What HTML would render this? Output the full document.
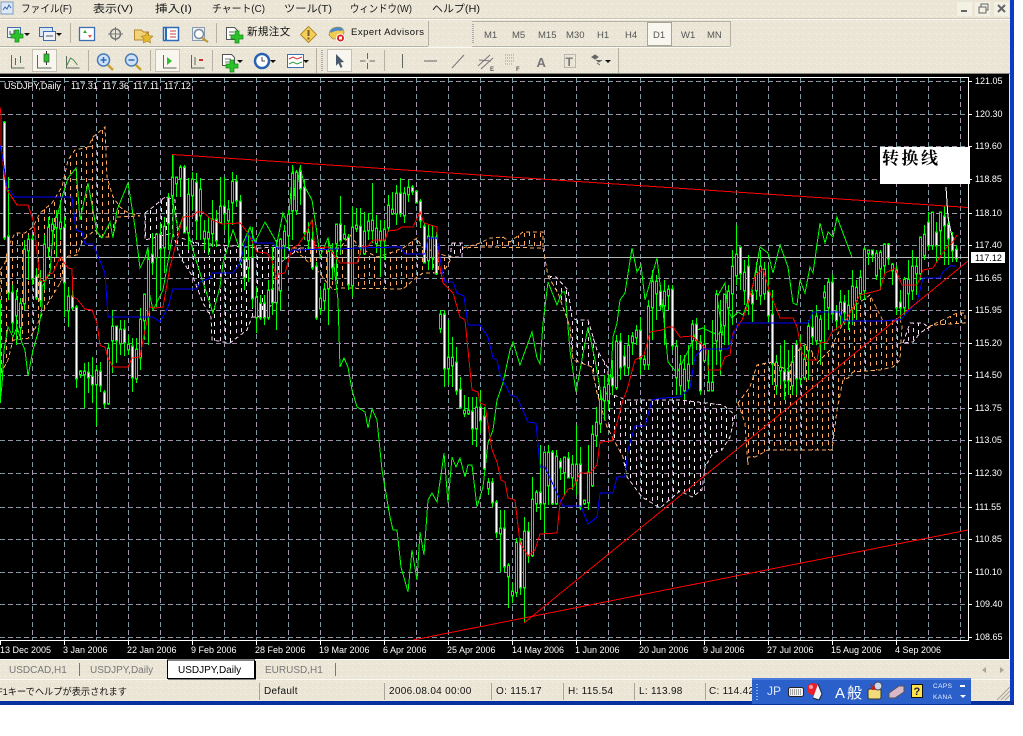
<!DOCTYPE html>
<html><head><meta charset="utf-8"><title>USDJPY,Daily</title>
<style>
html,body{margin:0;padding:0;background:#fff;width:1023px;height:736px;overflow:hidden}
svg{display:block}
text{font-family:"Liberation Sans","Noto Sans CJK JP",sans-serif}
.m{font-size:10.5px;fill:#1a1a1a}
.tf{font-size:9.5px;fill:#555}
.ax{font-size:9px;fill:#fff}
.st{font-size:10px;fill:#111;letter-spacing:.3px}
</style></head><body>
<svg width="1023" height="736" viewBox="0 0 1023 736" xmlns="http://www.w3.org/2000/svg">
<defs>
<pattern id="nz" width="6" height="6" patternUnits="userSpaceOnUse"><rect width="6" height="6" fill="#ebe6d6"/><path d="M0 0h1v1H0zM3 2h1v1H3zM5 4h1v1H5zM2 5h1v1H2z" fill="#f2dcd8"/><path d="M2 0h1v1H2zM5 1h1v1H5zM1 3h1v1H1zM4 5h1v1H4z" fill="#dfe8cf"/><path d="M4 3h1v1H4zM0 4h1v1H0z" fill="#f6f3e8"/></pattern>
<pattern id="po" width="16" height="8" patternUnits="userSpaceOnUse"><path d="M1.5 0v4M6.5 2v4M12.5 1v4" stroke="#ffa95c" stroke-width="1"/></pattern>
<pattern id="pw" width="16" height="8" patternUnits="userSpaceOnUse"><path d="M1.5 0v4M12.5 1v4" stroke="#f5d2f0" stroke-width="1"/><path d="M6.5 2v4" stroke="#fff" stroke-width="1"/></pattern>
<path id="pl" d="M-2-6h4v4h4v4h-4v4h-4v-4h-4v-4h4z" fill="#2cc22c" stroke="#118a11" stroke-width=".7"/>
<path id="dd" d="M-3 0h6l-3 3z" fill="#111"/>
<path id="gh" d="M0 81.5H968M0 114.5H968M0 146.5H968M0 179.5H968M0 213.5H968M0 245.5H968M0 278.5H968M0 310.5H968M0 343.5H968M0 375.5H968M0 408.5H968M0 440.5H968M0 473.5H968M0 507.5H968M0 539.5H968M0 572.5H968M0 604.5H968M0 637.5H968"/>
<path id="gv" d="M32.5 78V640M64.5 78V640M96.5 78V640M128.5 78V640M160.5 78V640M192.5 78V640M224.5 78V640M256.5 78V640M288.5 78V640M320.5 78V640M352.5 78V640M384.5 78V640M416.5 78V640M448.5 78V640M480.5 78V640M512.5 78V640M544.5 78V640M576.5 78V640M608.5 78V640M640.5 78V640M672.5 78V640M704.5 78V640M736.5 78V640M768.5 78V640M800.5 78V640M832.5 78V640M864.5 78V640M896.5 78V640M928.5 78V640M960.5 78V640"/>
<path id="bd" d="M4 123V237M8 237V292M12 293V322M16 300V315M20 304V327M24 250V303M28 240V250M32 240V278M36 277V297M40 282V300M44 245V280M48 228V247M52 225V230M56 218V227M60 223V228M64 228V282M68 297V310M72 297V307M76 308V378M80 372V374M84 372V374M88 373V377M92 377V384M96 371V384M100 372V385M104 393V403M108 349V403M112 327V340M116 327V340M120 330V343M124 330V342M128 345V349M132 347V377M136 350V378M140 320V357M144 295V320M148 260V316M152 255V262M156 235V257M160 235V248M164 227V247M168 198V223M172 178V195M176 178V183M180 168V178M184 168V232M188 195V232M192 180V195M196 183V220M200 190V215M204 232V238M208 233V238M212 220V233M216 220V240M220 207V222M224 207V213M228 210V220M232 182V202M236 182V200M240 202V260M244 260V277M248 260V267M252 258V298M256 298V317M260 304V317M264 304V317M268 291V317M272 290V302M276 247V302M280 240V290M284 232V245M288 215V235M292 174V210M296 173V210M300 172V188M304 188V232M308 233V240M312 240V267M316 267V317M320 299V308M324 290V300M328 252V288M332 253V267M336 225V243M340 225V240M344 235V238M348 238V284M352 228V285M356 226V228M360 227V247M364 232V253M368 222V230M372 221V230M376 229V243M380 232V240M384 230V240M388 206V227M392 210V213M396 194V213M400 194V213M404 194V215M408 188V194M412 188V191M416 192V202M420 202V220M424 227V262M428 237V260M432 238V257M436 238V273M440 315V328M444 315V368M448 358V368M452 358V365M456 363V390M460 390V407M464 411V413M468 411V413M472 412V428M476 408V428M480 408V420M484 417V468M488 483V488M492 483V502M496 503V532M500 529V533M504 529V566M508 566V576M512 592V595M516 543V592M520 543V587M524 532V587M528 532V555M532 500V555M536 493V503M540 493V503M544 453V503M548 453V485M552 453V503M556 457V503M560 462V467M564 458V472M568 459V477M572 465V477M576 465V480M580 465V507M584 501V503M588 473V502M592 435V485M596 423V435M600 400V423M604 388V400M608 385V400M612 378V385M616 342V387M620 342V367M624 357V365M628 346V367M632 337V342M636 331V337M640 331V358M644 360V364M648 307V364M652 282V307M656 282V293M660 292V305M664 292V305M668 290V295M672 290V345M676 347V377M680 365V385M684 370V390M688 365V380M692 325V340M696 325V340M700 343V390M704 345V360M708 383V390M712 383V390M716 295V340M720 333V350M724 295V325M728 292V307M732 267V293M736 255V275M740 248V273M744 273V290M748 267V300M752 295V303M756 273V290M760 267V295M764 270V293M768 292V315M772 315V363M776 363V385M780 368V370M784 372V380M788 372V380M792 363V385M796 345V378M800 350V378M804 360V377M808 327V350M812 328V336M816 317V340M820 320V340M824 293V297M828 283V307M832 283V313M836 312V320M840 303V315M844 303V312M848 306V320M852 287V307M856 288V300M860 278V293M864 250V290M868 251V253M872 251V254M876 254V275M880 253V268M884 245V265M888 245V258M892 265V270M896 270V307M900 303V307M904 280V307M908 280V293M912 267V290M916 267V273M920 238V273M924 235V255M928 223V245M932 213V245M936 233V245M940 213V230M944 217V225M948 225V238M952 238V250M956 250V258"/>
</defs>

<!-- window base -->
<rect x="0" y="0" width="1010" height="702" fill="url(#nz)" shape-rendering="crispEdges"/>
<rect x="1010" y="0" width="4" height="702" fill="#0b3cc4"/>
<rect x="0" y="701" width="1014" height="4" fill="#08309f"/>

<!-- menu bar -->
<rect x="0" y="18" width="1010" height="1" fill="#c9c6b8"/><rect x="0" y="19" width="1010" height="1" fill="#fbfaf2"/>
<rect x="1" y="2" width="12" height="12" fill="#dfe9f5" stroke="#7d9cc4"/><path d="M3 10l2-3 2 2 2-4 2 3" fill="none" stroke="#3568b0"/>
<text class="m" x="21" y="12" textLength="51" lengthAdjust="spacingAndGlyphs">ファイル(F)</text>
<text class="m" x="93" y="12" textLength="40" lengthAdjust="spacingAndGlyphs">表示(V)</text>
<text class="m" x="155" y="12" textLength="37" lengthAdjust="spacingAndGlyphs">挿入(I)</text>
<text class="m" x="212" y="12" textLength="53" lengthAdjust="spacingAndGlyphs">チャート(C)</text>
<text class="m" x="284" y="12" textLength="48" lengthAdjust="spacingAndGlyphs">ツール(T)</text>
<text class="m" x="350" y="12" textLength="62" lengthAdjust="spacingAndGlyphs">ウィンドウ(W)</text>
<text class="m" x="432" y="12" textLength="48" lengthAdjust="spacingAndGlyphs">ヘルプ(H)</text>
<rect x="957" y="2" width="15" height="14" fill="#f3f0e4"/><rect x="975" y="2" width="15" height="14" fill="#f3f0e4"/><rect x="994" y="2" width="15" height="14" fill="#f3f0e4"/>
<rect x="961" y="10" width="6" height="2" fill="#666"/>
<path d="M979 7h7v6h-7zM981 7V4h7v6h-2" fill="none" stroke="#666"/>
<path d="M998 5l7 7M1005 5l-7 7" stroke="#666" stroke-width="2"/>

<!-- toolbar 1 -->
<path d="M428.500 21V46M0 46.500H428M472 46.500H730M730.500 21V46M472 21.500H730" stroke="#b5b2a4" fill="none"/>
<path d="M0 47.500H730" stroke="#fbfaf2"/>
<rect x="7.500" y="27.500" width="13" height="10" fill="#eef3fa" stroke="#3d6fb0"/><path d="M10 31v4M14 30v5" stroke="#555"/><use href="#pl" x="17" y="36"/><use href="#dd" x="27" y="33"/>
<rect x="39.500" y="27.500" width="13" height="9" fill="#dbe7f5" stroke="#3d6fb0"/><rect x="43.500" y="31.500" width="12" height="9" fill="#eef3fa" stroke="#3d6fb0"/><path d="M46 36h7" stroke="#555"/><use href="#dd" x="59" y="33"/>
<path d="M70.500 23V43" stroke="#b5b2a4"/>
<rect x="79.500" y="27.500" width="15" height="13" fill="#fff" stroke="#3d6fb0" stroke-width="1.300"/><path d="M83 33l2-3 2 3z" fill="#2aaa2a"/><path d="M88 35l2 3 2-3z" fill="#e05a30"/>
<circle cx="115.500" cy="34" r="5" fill="none" stroke="#777" stroke-width="1.500"/><path d="M115.500 27v14M108 34h15" stroke="#777"/>
<path d="M134.500 30h7l2 2h5v8h-14z" fill="#f2d27a" stroke="#b48a30"/><path d="M147 32l1.800 3.600 4 .6-2.900 2.800.7 4-3.600-1.900-3.600 1.900.7-4-2.900-2.800 4-.6z" fill="#e8b830" stroke="#a07a20" stroke-width=".6"/>
<rect x="163.500" y="27.500" width="15" height="13" fill="#fff" stroke="#2f6ab8" stroke-width="1.500"/><path d="M166 28v12" stroke="#2f6ab8" stroke-width="2"/><path d="M170 31h6M170 34h6M170 37h6" stroke="#c04040"/>
<rect x="192.500" y="27.500" width="12" height="13" fill="#e8eef5" stroke="#8a9ab0"/><circle cx="199" cy="34" r="4.500" fill="#fff" stroke="#7a8a9a" stroke-width="1.500"/><path d="M202 38l6 4" stroke="#c09830" stroke-width="2"/>
<path d="M216.500 23V43" stroke="#b5b2a4"/>
<path d="M226.500 27.500h8l3 3v9h-11z" fill="#fff" stroke="#555"/><path d="M229 32h5M229 35h5" stroke="#666"/><use href="#pl" x="237" y="37"/>
<text x="247" y="35" font-size="10.500" fill="#111" letter-spacing=".4">新規注文</text>
<path d="M308.500 26.500l8 8-8 8-8-8z" fill="#f6cf5a" stroke="#b08a30"/><path d="M308.500 30v6" stroke="#7a5a20" stroke-width="2"/><rect x="307.500" y="37.500" width="2" height="2" fill="#7a5a20"/>
<path d="M329 35c0-6 5-8 9-8s6 2 6 6l-3 6h-8z" fill="#f2cc50" stroke="#9a7a30" stroke-width=".6"/><path d="M330 31c3-4 10-5 13-2l-1 2c-4-1-8 0-11 2z" fill="#4f8ac8"/><circle cx="340.500" cy="38" r="4" fill="#d92020" stroke="#fff"/><rect x="339" y="36.500" width="3" height="3" fill="#fff"/>
<text x="351" y="35" font-size="9.500" fill="#111" letter-spacing=".5">Expert Advisors</text>

<!-- timeframes -->
<path d="M473 24v19" stroke="#aaa" stroke-width="2" stroke-dasharray="1 1"/>
<rect x="647.500" y="22.500" width="24" height="23" fill="#f8f6ee" stroke="#a8a598"/>
<text class="tf" x="484" y="38">M1</text><text class="tf" x="512" y="38">M5</text><text class="tf" x="538" y="38">M15</text><text class="tf" x="566" y="38">M30</text><text class="tf" x="597" y="38">H1</text><text class="tf" x="625" y="38">H4</text><text class="tf" x="653" y="38">D1</text><text class="tf" x="681" y="38">W1</text><text class="tf" x="707" y="38">MN</text>

<!-- toolbar 2 -->
<path d="M618.500 48V73" stroke="#b5b2a4"/>
<g fill="none" stroke="#5b6b5b">
<path d="M11.500 55v13h13M15.500 58v7M20.500 56v7"/>
<path d="M66.500 56v12h13"/>
<path d="M66.500 66l4-8 3 2 4 5" stroke="#4a8a4a"/>
<path d="M191.500 55v13h13"/>
<path d="M88.500 50V71M150.500 50V71M212.500 50V71M384.500 50V71" stroke="#b5b2a4"/>
<path d="M316.500 48V73" stroke="#b5b2a4"/>
</g>
<rect x="32.500" y="49.500" width="24" height="22" fill="#f8f6ee" stroke="#c5c2b4"/>
<path d="M37.500 55v13h14" fill="none" stroke="#5b6b5b"/><path d="M46.500 51v14" stroke="#333"/><rect x="44" y="54" width="5" height="8" fill="#2cc22c" stroke="#333" stroke-width=".6"/>
<circle cx="103.500" cy="60" r="6" fill="#cfe2f7" stroke="#4a7ab8" stroke-width="1.500"/><path d="M100.500 60h6M103.500 57v6" stroke="#2a6ab8" stroke-width="1.500"/><path d="M108 65l5 5" stroke="#c8a030" stroke-width="2.500"/>
<circle cx="131.500" cy="60" r="6" fill="#cfe2f7" stroke="#4a7ab8" stroke-width="1.500"/><path d="M128.500 60h6" stroke="#2a6ab8" stroke-width="1.500"/><path d="M136 65l5 5" stroke="#c8a030" stroke-width="2.500"/>
<rect x="155.500" y="49.500" width="24" height="22" fill="#f8f6ee" stroke="#c5c2b4"/><path d="M163.500 55v13h13" fill="none" stroke="#5b6b5b"/><path d="M167 57l5 4-5 4z" fill="#2cc22c"/>
<path d="M195 57v8" fill="none" stroke="#5b6b5b"/><path d="M199 60h4" stroke="#d03030" stroke-width="2"/>
<path d="M222.500 54.500h9l3 3v8h-12z" fill="#fff" stroke="#555"/><path d="M225 59h6M225 62h6" stroke="#777"/><use href="#pl" x="232" y="66"/><use href="#dd" x="240" y="60"/>
<circle cx="262" cy="61" r="7" fill="#fff" stroke="#2a62b0" stroke-width="2.500"/><path d="M262 57v4h3" fill="none" stroke="#444"/><use href="#dd" x="273" y="60"/>
<rect x="287.500" y="54.500" width="16" height="13" fill="#fff" stroke="#3d6fb0"/><path d="M289 59l4-2 4 2 5-2" fill="none" stroke="#d03030"/><path d="M289 64l4-2 4 2 5-2" fill="none" stroke="#3a9a3a"/><use href="#dd" x="306" y="60"/>
<path d="M322 50v21" stroke="#aaa" stroke-width="2" stroke-dasharray="1 1"/>
<rect x="327.500" y="49.500" width="24" height="22" fill="#f8f6ee" stroke="#c5c2b4"/>
<path d="M336 54l8 8-3.500 .5 2 4.500-2 .8-2-4.500-2.500 2.500z" fill="#4a5a6a"/>
<path d="M367.500 53v6M367.500 63v6M360 61h5.500M369.500 61h5.500" stroke="#666"/>
<path d="M402.500 54v14" stroke="#666"/>
<path d="M424 61h13" stroke="#666"/>
<path d="M452 68l12-13" stroke="#777"/>
<path d="M478 66l12-11M481 69l12-11M479 60l12 1" stroke="#777" fill="none"/>
<text x="490" y="71" font-size="6" font-weight="bold" fill="#555">E</text>
<path d="M505 55h10M505 58h10M505 61h10M505 64h8" stroke="#999" stroke-dasharray="1 1"/>
<text x="516" y="71" font-size="6" font-weight="bold" fill="#555">F</text>
<text x="536.500" y="67" font-size="13" font-weight="bold" fill="#777">A</text>
<rect x="564.500" y="54.500" width="11" height="13" fill="none" stroke="#888" stroke-dasharray="1 1"/>
<text x="565.500" y="66" font-size="12" font-weight="bold" fill="#777">T</text>
<path d="M592 57l3-2 3 2-3 2zM596 60l3 2 3-2M600 65l-3-2" fill="#666" stroke="#666"/><use href="#dd" x="608" y="60"/>

<!-- chart -->
<rect x="0" y="73" width="1010" height="1" fill="#8a887c"/>
<rect x="0" y="74" width="1009" height="585" fill="#000"/>
<rect x="0" y="659" width="1010" height="1" fill="#fff"/>

<g stroke-width="1" fill="none" shape-rendering="crispEdges">
<g stroke="#7b9ba0" stroke-dasharray="5 11"><use href="#gh"/><use href="#gv"/></g>
<g stroke="#a594b0" stroke-dasharray="5 11" stroke-dashoffset="8"><use href="#gh"/><use href="#gv"/></g>
</g>

<!-- clouds -->
<g stroke-dasharray="4 3" stroke-width="1" shape-rendering="crispEdges">
<polygon fill="url(#po)" stroke="#ffa95c" points="0,270 5,263 8,247 15,233 25,233 33,227 40,213 52,203 62,187 68,160 75,150 88,147 93,137 105,127 107,177 113,197 120,207 127,212 140,216 117,217 113,237 100,237 95,230 83,240 77,255 63,257 62,280 50,300 45,308 38,323 30,338 13,340 8,360 0,375"/>
<polygon fill="url(#pw)" stroke="#f5d2f0" points="145,213 153,207 165,197 175,200 178,237 197,243 220,245 260,248 280,247 300,248 280,263 277,300 258,317 252,317 247,330 230,343 212,340 211,317 203,303 193,277 180,257 173,233 145,240"/>
<polygon fill="url(#po)" stroke="#ffa95c" points="293,248 340,248 350,235 360,248 377,257 390,253 403,248 417,238 422,247 443,255 452,257 443,273 423,273 417,277 403,289 340,288 333,290 317,270"/>
<polygon fill="url(#pw)" stroke="#f5d2f0" points="452,243 463,243 462,257 450,257"/>
<polygon fill="url(#po)" stroke="#ffa95c" points="463,248 480,243 490,238 503,237 510,242 523,232 543,232 543,248 483,247"/>
<polygon fill="url(#pw)" stroke="#f5d2f0" points="548,276 556,277 568,290 572,318 577,320 588,320 597,350 608,368 608,393 627,400 680,400 723,405 735,415 730,437 722,450 713,453 705,467 702,490 692,497 680,491 660,508 642,497 627,477 623,457 607,427 597,393 592,367 573,360 570,327 558,293"/>
<polyline fill="none" stroke="#ffa95c" points="543,248 548,276 558,293 570,327 573,360 592,367 597,393 607,427 623,457"/>
<polygon fill="url(#po)" stroke="#ffa95c" points="738,403 745,423 748,465 748,457 755,457 768,450 832,450 837,410 843,380 848,378 853,372 880,370 893,367 900,360 902,325 900,320 883,321 870,295 853,307 843,323 830,350 817,363 808,343 800,348 787,370 772,362 757,365 750,387"/>
<polygon fill="url(#pw)" stroke="#f5d2f0" points="903,343 910,323 923,323 928,327 933,325 920,333 913,342"/>
<polygon fill="url(#po)" stroke="#ffa95c" points="928,327 938,322 947,318 957,313 965,313 965,323 933,325"/>
</g>

<!-- price line -->
<path d="M0 257.500H968" stroke="#b8b8b8" stroke-width="1" shape-rendering="crispEdges"/>

<!-- chikou -->
<polyline fill="none" stroke="#00ff00" stroke-width="1" shape-rendering="crispEdges" points="0,403 2,385 4,350 8,327 13,337 17,327 22,343 25,350 28,376 33,350 38,333 42,307 42,287 50,273 53,233 58,213 62,197 68,178 76,168 80,220 88,183 97,232 102,238 110,222 113,238 117,210 128,183 135,227 140,268 145,258 148,247 148,287 153,310 163,290 173,233 173,155 172,197 178,230 183,217 200,273 213,313 220,287 223,263 233,230 240,250 250,227 255,242 265,222 277,243 283,213 288,225 293,167 295,200 300,167 305,187 312,200 317,233 320,257 328,238 333,257 338,300 340,367 344,358 348,367 352,390 357,407 365,412 368,428 372,409 377,420 382,470 390,517 393,530 397,530 401,567 408,592 412,550 417,580 420,532 424,555 428,500 432,493 437,502 442,468 444,453 448,503 452,457 456,467 460,458 465,477 468,465 472,465 477,507 483,487 488,443 493,430 497,400 503,383 510,350 513,342 520,365 532,332 537,358 540,364 543,323 548,282 557,305 562,292 565,292 570,350 576,392 588,327 595,360 602,400 607,393 611,373 613,337 617,323 620,300 625,293 632,248 637,272 641,265 645,300 657,258 663,310 668,362 677,373 685,357 690,347 697,330 703,328 713,333 723,335 717,297 725,283 728,310 732,318 738,312 743,315 752,290 760,247 768,253 773,273 780,245 788,267 793,303 797,305 800,280 805,293 810,267 813,273 820,223 825,243 828,232 833,237 837,217 843,233 852,257"/>

<!-- candles -->
<g transform="translate(.5 0)" shape-rendering="crispEdges" fill="none">
<path stroke="#00ff00" stroke-width="1" d="M0 300V403M4 121V240M8 177V300M12 285V333M16 290V345M20 298V340M24 240V310M28 235V280M32 235V285M36 268V300M40 270V307M44 235V290M48 217V257M52 218V245M56 210V257M60 200V240M64 217V317M68 287V327M72 287V310M76 305V388M80 370V378M84 363V408M88 362V393M92 357V403M96 365V426M100 362V392M104 390V408M108 343V405M112 310V373M116 327V363M120 320V355M124 320V356M128 335V355M132 338V392M136 338V383M140 308V370M144 295V340M148 250V345M152 233V275M156 235V307M160 223V290M164 217V273M168 193V250M172 155V205M176 177V197M180 165V197M184 165V233M188 178V250M192 172V210M196 173V240M200 178V240M204 220V250M208 217V255M212 200V247M216 210V247M220 177V223M224 177V230M228 200V247M232 172V225M236 175V207M240 195V265M244 245V290M248 230V282M252 227V308M256 287V333M260 295V320M264 295V325M268 280V320M272 247V315M276 240V330M280 238V310M284 225V260M288 210V250M292 165V240M296 170V215M300 165V205M304 180V240M308 222V250M312 220V270M316 262V320M320 290V315M324 283V310M328 240V325M332 243V280M336 225V280M340 196V255M344 225V240M348 234V290M352 207V297M356 208V232M360 208V255M364 212V255M368 213V240M372 183V243M376 215V253M380 220V277M384 220V260M388 195V232M392 192V215M396 185V225M400 178V217M404 187V223M408 180V202M412 185V195M416 192V203M420 199V228M424 223V263M428 225V270M432 225V270M436 232V275M440 310V333M444 310V387M448 320V385M452 337V387M456 347V395M460 377V408M464 395V417M468 397V415M472 397V445M476 397V447M480 390V433M484 407V470M488 478V495M492 478V507M496 500V538M500 510V572M504 510V572M508 563V608M512 583V603M516 538V597M520 538V595M524 517V623M528 522V563M532 477V557M536 490V512M540 445V520M544 453V533M548 445V505M552 450V505M556 450V505M560 458V480M564 457V495M568 452V478M572 455V490M576 425V495M580 447V510M584 500V505M588 445V510M592 425V487M596 407V447M600 390V433M604 375V420M608 375V410M612 360V395M616 335V390M620 333V380M624 345V375M628 335V375M632 332V355M636 325V345M640 317V375M644 355V370M648 300V370M652 270V340M656 275V320M660 285V310M664 280V345M668 285V310M672 285V350M676 340V395M680 355V395M684 355V400M688 345V390M692 320V365M696 318V350M700 335V395M704 325V360M708 350V390M712 320V390M716 290V365M720 300V375M724 295V345M728 285V345M732 250V325M736 225V285M740 247V290M744 260V305M748 255V315M752 290V322M756 262V300M760 250V305M764 262V300M768 265V322M772 290V385M776 355V395M780 345V385M784 340V400M788 350V395M792 345V395M796 340V395M800 335V385M804 345V380M808 320V380M812 310V345M816 305V345M820 315V365M824 285V350M828 278V330M832 275V320M836 305V330M840 290V325M844 295V325M848 290V330M852 270V325M856 280V320M860 270V300M864 247V300M868 250V265M872 250V262M876 250V280M880 250V290M884 243V275M888 243V265M892 263V285M896 265V315M900 290V320M904 277V315M908 260V310M912 250V300M916 257V295M920 238V280M924 225V260M928 212V250M932 213V250M936 222V262M940 212V255M944 206V265M948 217V265M952 232V262M956 245V262"/>
<use href="#bd" stroke="#00ff00" stroke-width="3" stroke-linecap="square"/>
<use href="#bd" stroke="#000" stroke-width="1"/>
<path stroke="#fff" stroke-width="1" d="M4 123V237M8 237V292M12 293V322M32 240V278M36 277V297M40 282V300M64 228V282M72 297V307M76 308V378M88 373V377M92 377V384M100 372V385M104 393V403M116 327V340M124 330V342M132 347V377M152 255V262M160 235V248M168 198V223M184 168V232M196 183V220M216 220V240M224 207V213M236 182V200M240 202V260M244 260V277M252 258V298M260 304V317M264 304V317M272 290V302M300 172V188M304 188V232M312 240V267M316 267V317M332 253V267M340 225V240M348 238V284M360 227V247M400 194V213M412 188V191M416 192V202M420 202V220M424 227V262M436 238V273M444 315V368M456 363V390M460 390V407M472 412V428M480 408V420M484 417V468M492 483V502M496 503V532M504 529V566M520 543V587M528 532V555M540 493V503M552 453V503M560 462V467M568 459V477M580 465V507M612 378V385M620 342V367M624 357V365M640 331V358M660 292V305M672 290V345M696 325V340M700 343V390M740 248V273M748 267V300M752 295V303M768 292V315M772 315V363M784 372V380M788 372V380M796 345V378M812 328V336M832 283V313M836 312V320M844 303V312M872 251V254M888 245V258M896 270V307M900 303V307M928 223V245M936 233V245M944 217V225M948 225V238M952 238V250M956 250V258"/>
</g>

<!-- tenkan -->
<polyline fill="none" stroke="#ff0000" stroke-width="1" shape-rendering="crispEdges" points="0,107 1,115 1,145 4,173 7,190 17,205 28,205 33,220 35,233 40,280 45,282 48,274 53,273 60,257 68,268 72,269 73,297 77,299 85,309 92,310 97,323 100,345 101,346 105,347 108,358 113,367 128,367 132,358 140,357 143,340 150,307 155,308 163,307 170,267 177,240 183,217 193,216 197,212 203,212 212,220 222,224 240,223 248,233 257,252 267,253 272,260 277,280 278,274 285,273 292,248 298,245 305,235 312,220 315,248 328,247 340,263 346,263 357,263 362,247 368,246 373,240 385,240 388,231 397,230 402,227 413,227 420,212 424,223 437,227 438,257 443,283 453,293 460,317 465,320 472,390 478,392 480,403 485,405 492,450 497,462 501,480 505,482 508,498 515,500 520,543 528,556 535,550 540,534 557,533 560,503 568,489 573,488 580,473 590,473 597,465 600,442 612,441 617,423 623,400 627,390 635,360 644,355 650,332 662,330 668,327 673,327 680,337 692,336 700,343 707,350 708,370 720,370 725,357 730,355 733,333 742,320 747,308 755,276 763,269 770,293 780,318 793,318 797,327 802,353 808,360 817,360 820,343 827,342 832,332 845,322 860,295 880,290 885,273 895,268 902,285 917,285 923,270 933,268 938,260 947,247 952,243 957,235"/>
<!-- kijun -->
<polyline fill="none" stroke="#0000ff" stroke-width="1" shape-rendering="crispEdges" points="0,145 3,160 7,187 15,197 72,197 76,230 82,232 85,244 93,244 105,273 108,317 153,317 160,322 168,307 173,289 197,289 200,282 210,278 212,273 233,273 240,263 248,233 255,243 273,243 277,248 287,248 290,252 293,250 340,249 357,248 400,247 405,254 425,254 428,238 437,238 442,270 445,282 453,282 457,293 464,296 468,325 480,325 488,337 493,358 497,360 500,375 508,390 510,395 517,397 528,422 536,423 540,467 545,467 550,478 563,506 581,506 588,524 597,517 600,493 613,493 617,477 625,477 628,450 635,426 645,426 652,400 662,398 680,397 690,388 695,357 702,349 728,349 738,323 808,323 813,312 840,312 843,321 883,321 893,320 900,320 917,302 923,278 940,278 943,272 950,266 956,266"/>

<!-- trend lines -->
<g fill="none" stroke="#ff0000" stroke-width="1" shape-rendering="crispEdges">
<path d="M172 154.500L968 207.500"/>
<path d="M524 623L968 261"/>
<path d="M413 640L968 530"/>
</g>

<!-- annotation -->
<polyline fill="none" stroke="#fff" stroke-width="1" shape-rendering="crispEdges" points="946,187 948,217 951,232 953,240"/>

<!-- frame -->
<path d="M0 77.500H968.500V640.500H0" fill="none" stroke="#fff" shape-rendering="crispEdges"/>
<path d="M968 81.500h4M968 114.500h4M968 146.500h4M968 179.500h4M968 213.500h4M968 245.500h4M968 278.500h4M968 310.500h4M968 343.500h4M968 375.500h4M968 408.500h4M968 440.500h4M968 473.500h4M968 507.500h4M968 539.500h4M968 572.500h4M968 604.500h4M968 637.500h4M.5 640v5M64.500 640v5M128.500 640v5M192.500 640v5M256.500 640v5M320.500 640v5M384.500 640v5M448.500 640v5M512.500 640v5M576.500 640v5M640.500 640v5M704.500 640v5M768.500 640v5M832.500 640v5M896.500 640v5" stroke="#fff" shape-rendering="crispEdges"/>

<rect x="880" y="147" width="90" height="37" fill="#fff"/>
<text x="882" y="164" font-size="17" font-weight="bold" fill="#000" letter-spacing="2.500" style="font-family:'Liberation Serif','Noto Serif CJK SC',serif">转换线</text>

<!-- price axis -->
<g class="ax">
<text class="ax" x="975" y="84">121.05</text><text class="ax" x="975" y="117">120.30</text><text class="ax" x="975" y="149">119.60</text><text class="ax" x="975" y="182">118.85</text><text class="ax" x="975" y="216">118.10</text><text class="ax" x="975" y="248">117.40</text><text class="ax" x="975" y="281">116.65</text><text class="ax" x="975" y="313">115.95</text><text class="ax" x="975" y="346">115.20</text><text class="ax" x="975" y="378">114.50</text><text class="ax" x="975" y="411">113.75</text><text class="ax" x="975" y="443">113.05</text><text class="ax" x="975" y="476">112.30</text><text class="ax" x="975" y="510">111.55</text><text class="ax" x="975" y="542">110.85</text><text class="ax" x="975" y="575">110.10</text><text class="ax" x="975" y="607">109.40</text><text class="ax" x="975" y="640">108.65</text>
</g>
<rect x="971" y="252" width="34" height="11" fill="#fff"/>
<text x="975" y="261" font-size="9" fill="#000">117.12</text>

<!-- date axis -->
<text class="ax" x="0" y="653">13 Dec 2005</text><text class="ax" x="63" y="653">3 Jan 2006</text><text class="ax" x="127" y="653">22 Jan 2006</text><text class="ax" x="191" y="653">9 Feb 2006</text><text class="ax" x="255" y="653">28 Feb 2006</text><text class="ax" x="319" y="653">19 Mar 2006</text><text class="ax" x="383" y="653">6 Apr 2006</text><text class="ax" x="447" y="653">25 Apr 2006</text><text class="ax" x="512" y="653">14 May 2006</text><text class="ax" x="575" y="653">1 Jun 2006</text><text class="ax" x="639" y="653">20 Jun 2006</text><text class="ax" x="703" y="653">9 Jul 2006</text><text class="ax" x="767" y="653">27 Jul 2006</text><text class="ax" x="831" y="653">15 Aug 2006</text><text class="ax" x="895" y="653">4 Sep 2006</text>

<text class="ax" x="4" y="89">USDJPY,Daily</text><text class="ax" x="71" y="89">117.31</text><text class="ax" x="102" y="89">117.36</text><text class="ax" x="133" y="89">117.11</text><text class="ax" x="164" y="89">117.12</text>

<!-- tabs -->
<rect x="0" y="679" width="1010" height="1" fill="#fbfaf2"/>
<rect x="167.500" y="660" width="87" height="18.500" fill="#fff" stroke="#000"/>
<path d="M255.500 661V679H168" stroke="#000" fill="none"/>
<path d="M79.500 663V676M335.500 663V676" stroke="#777"/>
<text x="9" y="673" fill="#777" font-size="10">USDCAD,H1</text>
<text x="90" y="673" fill="#777" font-size="10">USDJPY,Daily</text>
<text x="178" y="673" fill="#000" font-size="10">USDJPY,Daily</text>
<text x="265" y="673" fill="#777" font-size="10">EURUSD,H1</text>
<path d="M986 667v6l-4-3zM1000 667v6l4-3z" fill="#a8a598"/>

<!-- status bar -->
<path d="M259.500 683v17M384.500 683v17M491.500 683v17M563.500 683v17M634.500 683v17M705.500 683v17" stroke="#a8a598"/>
<text x="-3" y="695" font-size="9.500" fill="#111" textLength="130" lengthAdjust="spacingAndGlyphs">F1キーでヘルプが表示されます</text>
<text class="st" x="264" y="694">Default</text>
<text class="st" x="389" y="694">2006.08.04 00:00</text>
<text class="st" x="496" y="694">O: 115.17</text>
<text class="st" x="568" y="694">H: 115.54</text>
<text class="st" x="639" y="694">L: 113.98</text>
<text class="st" x="709" y="694">C: 114.42</text>
<path d="M997 700l13-13M1001 700l9-9M1005 700l5-5" stroke="#a8a598" fill="none"/>

<!-- language bar -->
<rect x="752" y="678" width="219" height="26" fill="#2b5fc9"/>
<rect x="752" y="678" width="219" height="2" fill="#4a7ada"/>
<path d="M757 684v16" stroke="#8fb0ee" stroke-width="2" stroke-dasharray="1 2"/>
<text x="767" y="695" font-size="12" fill="#dce8ff">JP</text>
<rect x="788.500" y="687.500" width="15" height="9" rx="2" fill="#f4f4f4" stroke="#222"/><path d="M790 690h12M790 692h12M790 694h12" stroke="#555" stroke-dasharray="1 1"/>
<circle cx="813" cy="689" r="6" fill="#e8202a"/><path d="M818 684l4 10-3 6-6-2" fill="#f4f4f4" stroke="#223"/><circle cx="811" cy="687" r="2" fill="#ff9aa0"/>
<text x="835" y="698" font-size="15" fill="#fff">A</text>
<text x="847" y="698" font-size="15" fill="#fff">般</text>
<rect x="868" y="689" width="13" height="10" rx="2" fill="#f2dc7a" stroke="#333"/><circle cx="878" cy="686" r="4" fill="#cfd8e8" stroke="#445"/><path d="M871 684l2 6M874 686l1 4" stroke="#c02020" stroke-width="1.500"/>
<path d="M889 693l10-7h5v6l-9 6h-6z" fill="#d8b8c8" stroke="#555"/>
<rect x="911.500" y="684.500" width="11" height="13" fill="#ffe34a" stroke="#111"/><text x="913.500" y="695" font-size="11" font-weight="bold" fill="#223">?</text>
<text x="933" y="688" font-size="6.500" fill="#e8f0ff" letter-spacing=".4">CAPS</text>
<text x="933" y="699" font-size="6.500" fill="#e8f0ff" letter-spacing=".4">KANA</text>
<rect x="960" y="685" width="5" height="2" fill="#fff"/>
<path d="M960 695h6l-3 3z" fill="#fff"/>
</svg>
</body></html>
